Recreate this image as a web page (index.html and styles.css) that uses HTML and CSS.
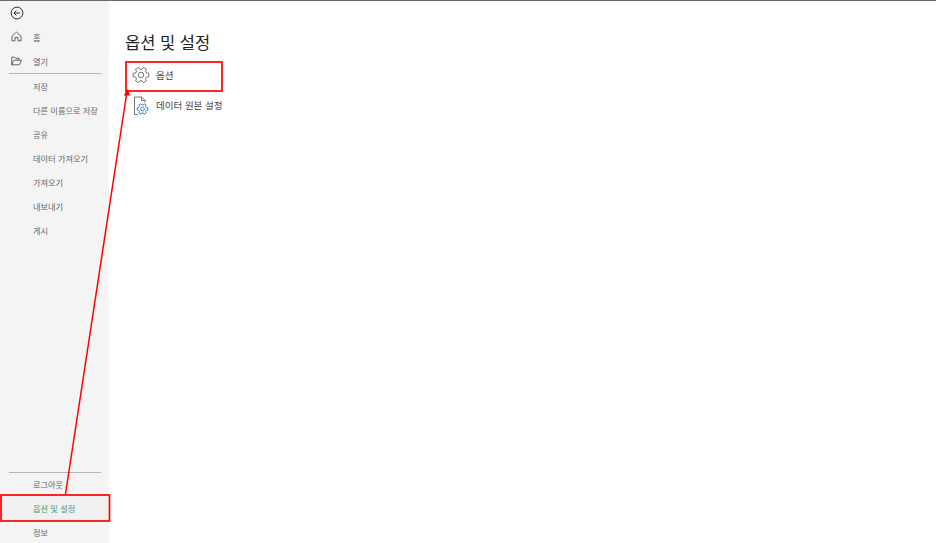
FILE: index.html
```html
<!DOCTYPE html>
<html lang="ko">
<head>
    <meta charset="utf-8">
    <title>옵션 및 설정</title>
    <link rel="stylesheet" href="styles.css">
</head>
<body>
    <div class="app">
        <nav class="sidebar">
            <div class="nav-top">
                <div class="back-row">
                    <svg width="14" height="14" viewBox="0 0 14 14" fill="none" stroke="#333" stroke-width="1">
                        <circle cx="7" cy="7" r="5.9"/>
                        <path d="M10 7H4.2M6.4 4.6 4 7l2.4 2.4"/>
                    </svg>
                </div>
                <div class="nav-item">
                    <svg class="nav-icon" width="11" height="11" viewBox="0 0 11 11" fill="none" stroke="#555" stroke-width="0.9">
                        <path d="M1 5.2 5.5 1.2l4.5 4v4.6H7V6.6H4v3.2H1z"/>
                    </svg>
                    <span>홈</span>
                </div>
                <div class="nav-item">
                    <svg class="nav-icon" width="11" height="10" viewBox="0 0 11 10" fill="none" stroke="#555" stroke-width="0.9">
                        <path d="M.7 8.8V1.2h3l1 1.2h3.4v1.800M.7 8.8h7.600l2.200-4.600H2.800z"/>
                    </svg>
                    <span>열기</span>
                </div>
                <div class="divider"></div>
                <div class="nav-item sub">저장</div>
                <div class="nav-item sub">다른 이름으로 저장</div>
                <div class="nav-item sub">공유</div>
                <div class="nav-item sub">데이터 가져오기</div>
                <div class="nav-item sub">가져오기</div>
                <div class="nav-item sub">내보내기</div>
                <div class="nav-item sub">게시</div>
            </div>
            <div class="nav-bottom">
                <div class="divider"></div>
                <div class="nav-item sub">로그아웃</div>
                <div class="nav-item sub active">옵션 및 설정</div>
                <div class="nav-item sub">정보</div>
            </div>
        </nav>
        <main class="content">
            <h1 class="title">옵션 및 설정</h1>
            <div class="option-list">
                <div class="option">
                    <svg width="18" height="18" viewBox="0 0 18 18" fill="none" stroke="#666" stroke-width="0.9" stroke-linejoin="round">
                        <circle cx="9" cy="9" r="2.8"/>
                        <path d="M14.45 7.02 16.8 7.2V10.8L14.45 10.98 13.44 12.73 14.46 14.85 11.34 16.65 10.01 14.71H7.99L6.66 16.65 3.54 14.85 4.56 12.73 3.55 10.98 1.2 10.8V7.2L3.55 7.02 4.56 5.27 3.54 3.15 6.66 1.35 7.99 3.29H10.01L11.34 1.35 14.46 3.15 13.44 5.27z"/>
                    </svg>
                    <span>옵션</span>
                </div>
                <div class="option doc-option">
                    <svg width="20" height="22" viewBox="0 0 20 22" fill="none" stroke="#666" stroke-width="0.9" stroke-linejoin="round">
                        <path d="M6 20.5H2.5V3H9.5L13 6.5V8.5M9.5 3V6.5H13"/>
                        <g stroke="#2f86c9" stroke-width="1.4" transform="translate(10.5 15) scale(.68) translate(-9 -9)">
                            <circle cx="9" cy="9" r="2.8"/>
                            <path d="M14.45 7.02 16.8 7.2V10.8L14.45 10.98 13.44 12.73 14.46 14.85 11.34 16.65 10.01 14.71H7.99L6.66 16.65 3.54 14.85 4.56 12.73 3.55 10.98 1.2 10.8V7.2L3.55 7.02 4.56 5.27 3.54 3.15 6.66 1.35 7.99 3.29H10.01L11.34 1.35 14.46 3.15 13.44 5.27z"/>
                        </g>
                    </svg>
                    <span>데이터 원본 설정</span>
                </div>
            </div>
        </main>
        <svg class="annotation" width="936" height="543" viewBox="0 0 936 543" fill="none" stroke="#ff0000">
            <rect x="126" y="62" width="96" height="29" stroke-width="1.7"/>
            <rect x="1" y="495" width="108.5" height="26" stroke-width="1.7"/>
            <path d="M65.500 494 126.600 94" stroke-width="1.500"/>
            <path d="M127.300 89 123.800 95.500h6.500z" fill="#ff0000" stroke="none"/>
        </svg>
    </div>
</body>
</html>
```

FILE: styles.css
```css
html, body {
    margin: 0;
    height: 100%;
    overflow: hidden;
    background: #fff;
}
body {
    font-family: "Noto Sans CJK KR", "Noto Sans", sans-serif;
}
.app {
    position: relative;
    display: flex;
    width: 936px;
    height: 543px;
    box-sizing: border-box;
    border-top: 1px solid #6a6a6a;
}
.sidebar {
    display: flex;
    flex-direction: column;
    justify-content: space-between;
    flex: none;
    width: 109px;
    background: #f4f4f4;
}
.back-row {
    display: flex;
    align-items: center;
    height: 24px;
    padding-left: 10px;
}
.nav-item {
    display: flex;
    align-items: center;
    height: 24.1px;
    padding-left: 11px;
    padding-bottom: 1px;
    box-sizing: border-box;
    font-size: 8.2px;
    color: #666;
    white-space: nowrap;
}
.nav-item.sub {
    padding-left: 33px;
}
.nav-bottom .nav-item {
    height: 22px;
}
.nav-bottom .nav-item.active {
    height: 26px;
    color: #4f9a80;
    background: #f0f0f0;
}
.nav-icon {
    width: 11px;
    margin-right: 11px;
}
.divider {
    height: 1px;
    margin: 0 8px 0 9px;
    background: #b5b5b5;
}
.content {
    flex: 1;
    padding: 31px 0 0 16px;
}
.title {
    margin: 0 0 8px 0;
    font-size: 16.5px;
    font-weight: 400;
    line-height: 20px;
    color: #222;
}
.option {
    display: flex;
    align-items: center;
    gap: 6px;
    height: 30px;
    padding-left: 7px;
    font-size: 9.5px;
    color: #444;
    white-space: nowrap;
}
.doc-option {
    gap: 4px;
}
.annotation {
    position: absolute;
    top: -1px;
    left: 0;
}
```
